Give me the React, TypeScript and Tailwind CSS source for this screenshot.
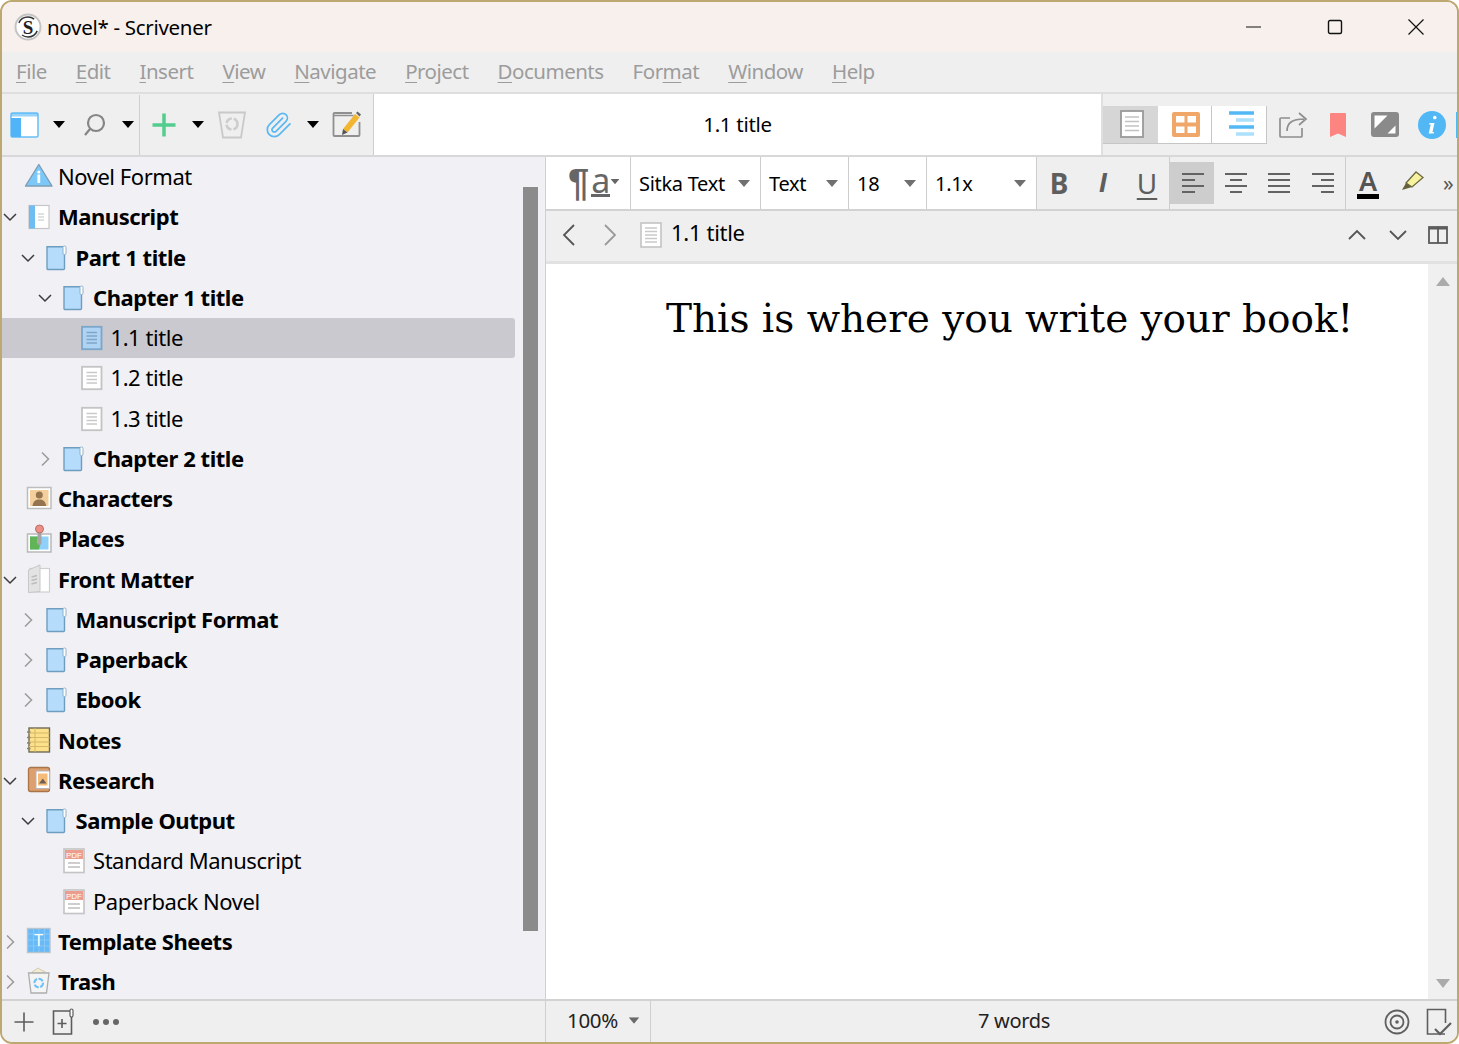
import type {ReactNode} from "react";

type IconName = "info" | "book" | "folder" | "doc" | "docSel" | "chars" | "places" | "front" | "notes" | "research" | "pdf" | "sheet" | "trash";

interface Row {
    label: string;
    depth: 0 | 1 | 2 | 3;
    bold?: boolean;
    open?: boolean;
    icon: IconName;
    selected?: boolean;
}

const rows: Row[] = [
    {label: "Novel Format", depth: 0, icon: "info"},
    {label: "Manuscript", depth: 0, bold: true, open: true, icon: "book"},
    {label: "Part 1 title", depth: 1, bold: true, open: true, icon: "folder"},
    {label: "Chapter 1 title", depth: 2, bold: true, open: true, icon: "folder"},
    {label: "1.1 title", depth: 3, icon: "docSel", selected: true},
    {label: "1.2 title", depth: 3, icon: "doc"},
    {label: "1.3 title", depth: 3, icon: "doc"},
    {label: "Chapter 2 title", depth: 2, bold: true, open: false, icon: "folder"},
    {label: "Characters", depth: 0, bold: true, icon: "chars"},
    {label: "Places", depth: 0, bold: true, icon: "places"},
    {label: "Front Matter", depth: 0, bold: true, open: true, icon: "front"},
    {label: "Manuscript Format", depth: 1, bold: true, open: false, icon: "folder"},
    {label: "Paperback", depth: 1, bold: true, open: false, icon: "folder"},
    {label: "Ebook", depth: 1, bold: true, open: false, icon: "folder"},
    {label: "Notes", depth: 0, bold: true, icon: "notes"},
    {label: "Research", depth: 0, bold: true, open: true, icon: "research"},
    {label: "Sample Output", depth: 1, bold: true, open: true, icon: "folder"},
    {label: "Standard Manuscript", depth: 2, icon: "pdf"},
    {label: "Paperback Novel", depth: 2, icon: "pdf"},
    {label: "Template Sheets", depth: 0, bold: true, open: false, icon: "sheet"},
    {label: "Trash", depth: 0, bold: true, open: false, icon: "trash"},
];

const indent = ["pl-0", "pl-[17.5px]", "pl-[35px]", "pl-[52.5px]"];

function TreeIcon({name}: { name: IconName }) {
    return (
        <svg width="24" height="26" viewBox="0 0 24 26" className="shrink-0 ml-[7px] overflow-visible">
            {name === "info" && (
                <g>
                    <path d="M13.8 0.5 27 22H0.5Z" fill="#7cc8f8" stroke="#7d9db5" strokeWidth="1.4" strokeLinejoin="round"/>
                    <rect x="12.4" y="10.5" width="2.8" height="8.5" fill="#fff"/>
                    <circle cx="13.8" cy="8" r="1.6" fill="#fff"/>
                </g>
            )}
            {name === "book" && (
                <g>
                    <rect x="4" y="1.5" width="20" height="23" fill="#fff" stroke="#c6c6c6" strokeWidth="1.2"/>
                    <rect x="4" y="1.5" width="6" height="23" fill="#6fbcf2"/>
                    <path d="M13 10h6M13 13h6M13 16h6" stroke="#c4c4c4" strokeWidth="1.2"/>
                </g>
            )}
            {name === "folder" && (
                <g>
                    <path d="M4 1.7H21.5V23.5a1 1 0 0 1-1 1H5a1 1 0 0 1-1-1Z" fill="#b5dcfb" stroke="#6f9dbf" strokeWidth="1.4"/>
                    <rect x="20" y="1" width="3" height="8.5" rx="1.3" fill="#fff" stroke="#8fb2cb" strokeWidth="1"/>
                </g>
            )}
            {name === "doc" && (
                <g>
                    <rect x="4" y="1.8" width="19.5" height="22.4" fill="#fff" stroke="#c4c4c4" strokeWidth="1.8"/>
                    <path d="M8.5 7.5h10.500M8.5 11h10.500M8.5 14.500h10.500M8.5 18h10.500" stroke="#c9c9c9" strokeWidth="1.3"/>
                </g>
            )}
            {name === "docSel" && (
                <g>
                    <rect x="4" y="1.8" width="19.5" height="22.4" fill="#afd3f2" stroke="#7da6cb" strokeWidth="1.8"/>
                    <path d="M8.5 7.5h10.500M8.5 11h10.500M8.5 14.500h10.500M8.5 18h10.500" stroke="#7fa6c9" strokeWidth="1.3"/>
                </g>
            )}
            {name === "chars" && (
                <g>
                    <rect x="2.5" y="1.5" width="23.5" height="21" fill="#fff" stroke="#bdbdbd" strokeWidth="1.5"/>
                    <rect x="5" y="4" width="18.5" height="16" fill="#f3cf9d"/>
                    <circle cx="14.3" cy="9" r="3.5" fill="#94744e"/>
                    <path d="M7.5 20c.6-5 3.2-6.500 6.800-6.500s6.200 1.500 6.800 6.500Z" fill="#94744e"/>
                </g>
            )}
            {name === "places" && (
                <g>
                    <rect x="2.5" y="8" width="23.5" height="18" fill="#fff" stroke="#b9b9b9" strokeWidth="1.5"/>
                    <rect x="5" y="10.5" width="18.5" height="13" fill="#8ed0f7"/>
                    <path d="M5 10.500h8l-1 6 3 3-1 4H5Z" fill="#62b556"/>
                    <rect x="12.5" y="6" width="4" height="13" rx="2" fill="#a5a5a5"/>
                    <circle cx="14.5" cy="3" r="4" fill="#ee8f85" stroke="#b86e67"/>
                </g>
            )}
            {name === "front" && (
                <g>
                    <rect x="5" y="1.5" width="19.5" height="23.5" fill="#fff" stroke="#cfcfcf" strokeWidth="1.2"/>
                    <path d="M3.500 3 15-2v26.500L3.500 25.500Z" fill="#e3e3e3" stroke="#c7c7c7"/>
                    <path d="M6.500 10l5.500-1.500M6.500 13.500l5.500-1.500M6.500 17l5.500-1.500" stroke="#bcbcbc" strokeWidth="1.3"/>
                </g>
            )}
            {name === "notes" && (
                <g>
                    <rect x="4" y="0" width="20.5" height="24" fill="#fce08a" stroke="#6f6a58" strokeWidth="1.4"/>
                    <path d="M4 5h20.500M4 9.500h20.500M4 14h20.500M4 18.500h20.500M10 0v24" stroke="#d6b865" strokeWidth="1"/>
                    <path d="M2 4h3.500M2 9.500h3.500M2 15h3.500M2 20.500h3.500" stroke="#8b8166" strokeWidth="1.5"/>
                </g>
            )}
            {name === "research" && (
                <g>
                    <rect x="3.5" y="-.5" width="21" height="24" rx="2" fill="#dd9f6e" stroke="#a97449" strokeWidth="1.3"/>
                    <rect x="11" y="3" width="13.5" height="17.5" fill="#fff" stroke="#b6b6b6"/>
                    <rect x="13" y="5.5" width="9.5" height="12" fill="#f7bb79"/>
                    <path d="M14 15.500 17.800 10.500l3.700 5Z" fill="#686058"/>
                </g>
            )}
            {name === "pdf" && (
                <g>
                    <rect x="4" y="1" width="20" height="23.5" fill="#fff" stroke="#c4c4c4" strokeWidth="1.6"/>
                    <rect x="5" y="2" width="18" height="9" fill="#ed9d8d"/>
                    <text x="14" y="9.5" textAnchor="middle" fontSize="8" fontFamily="Liberation Sans" fill="#fff">PDF</text>
                    <path d="M8 15h12M8 19h12" stroke="#bfbfbf" strokeWidth="1.4"/>
                </g>
            )}
            {name === "sheet" && (
                <g>
                    <rect x="2.5" y="-.5" width="22.5" height="24" fill="#67b9f7" stroke="#b9c4cc" strokeWidth="1.4"/>
                    <path d="M2.500 5h22.500M2.500 11h22.500M2.500 17h22.500M8.500 -.500v24M14 -.500v24M19.500 -.500v24" stroke="#8ecbf8" strokeWidth=".8"/>
                    <text x="13.7" y="17" textAnchor="middle" fontSize="16" fontFamily="Noto Sans" fill="#fff">T</text>
                </g>
            )}
            {name === "trash" && (
                <g>
                    <path d="M7 3l6-4 4 2.500 3 1-1 1.500H8Z" fill="#f3ead0" stroke="#c8c2ab" strokeWidth=".8"/>
                    <path d="M3.500 4h20.500l-2.500 20H6Z" fill="#f4f4f4" stroke="#adadad" strokeWidth="1.3"/>
                    <circle cx="13.7" cy="14" r="4.3" fill="none" stroke="#6ec1f5" strokeWidth="2" strokeDasharray="5 1.5"/>
                </g>
            )}
        </svg>
    );
}

function Chevron({open}: { open: boolean }) {
    return (
        <svg width="16" height="16" viewBox="0 0 16 16" className="shrink-0" fill="none" strokeWidth="1.5"
             stroke={open ? "#3c3c3c" : "#9a9a9a"}>
            {open ? <path d="M2 5 8 11l6-6"/> : <path d="M5 1.500 11.500 8 5 14.500"/>}
        </svg>
    );
}

function Caret({className = "", color = "#000"}: { className?: string; color?: string }) {
    return (
        <svg width="12" height="7" viewBox="0 0 12 7" className={`shrink-0 ${className}`}>
            <path d="M0 0h12L6 7Z" fill={color}/>
        </svg>
    );
}

function TreeRow({row}: { row: Row }) {
    return (
        <div className={`flex items-center h-[40.25px] rounded-r-[3px] text-[22px] text-black ${indent[row.depth]} ${row.selected ? "bg-[#c9c9cf]" : ""}`}>
            <span className="w-[16px] h-[16px] shrink-0">
                {row.open !== undefined && <Chevron open={row.open}/>}
            </span>
            <TreeIcon name={row.icon}/>
            <span className={`ml-[9px] -mt-[1px] whitespace-nowrap tracking-[-0.45px] ${row.bold ? "font-bold" : ""}`}>{row.label}</span>
        </div>
    );
}

function Sidebar() {
    return (
        <div className="w-[544px] shrink-0 bg-[#f0f0f5] flex border-r border-[#cfcfcf]">
            <div className="w-[513px] shrink-0">
                {rows.map((row) => <TreeRow key={row.label} row={row}/>)}
            </div>
            <div className="flex-1">
                <div className="ml-[8px] mt-[30px] w-[15px] h-[744px] bg-[#8b8b8b]"/>
            </div>
        </div>
    );
}

const menus: { pre: string; key: string; post: string }[] = [
    {pre: "", key: "F", post: "ile"},
    {pre: "", key: "E", post: "dit"},
    {pre: "", key: "I", post: "nsert"},
    {pre: "", key: "V", post: "iew"},
    {pre: "", key: "N", post: "avigate"},
    {pre: "", key: "P", post: "roject"},
    {pre: "", key: "D", post: "ocuments"},
    {pre: "For", key: "m", post: "at"},
    {pre: "", key: "W", post: "indow"},
    {pre: "", key: "H", post: "elp"},
];

function TitleBar() {
    return (
        <div className="h-[50px] shrink-0 bg-[#f7f0ed] flex items-center">
            <svg width="28" height="28" viewBox="0 0 28 28" className="ml-[12px]">
                <circle cx="14" cy="14" r="12.5" fill="#fff" stroke="#c4c4c4" strokeWidth="2"/>
                <circle cx="14" cy="14" r="10" fill="none" stroke="#333" strokeWidth="1.5" strokeDasharray="18 13.4" strokeDashoffset="-4"/>
                <text x="14" y="20.5" textAnchor="middle" fontSize="19" fontWeight="700" fontFamily="Liberation Serif" fill="#222">S</text>
            </svg>
            <span className="ml-[5px] text-[20.5px] tracking-[-0.3px] text-black">novel* - Scrivener</span>
            <div className="ml-auto flex items-center">
                <svg width="16" height="16" viewBox="0 0 16 16"><path d="M0 8h15" stroke="#111" strokeWidth="1.1"/></svg>
                <svg width="16" height="16" viewBox="0 0 16 16" className="ml-[65px]">
                    <rect x="1.5" y="1.5" width="13" height="13" rx="1.5" fill="none" stroke="#111" strokeWidth="1.4"/>
                </svg>
                <svg width="16" height="16" viewBox="0 0 16 16" className="ml-[65px] mr-[33px]">
                    <path d="M.5.500l15 15M15.500.500l-15 15" stroke="#111" strokeWidth="1.2"/>
                </svg>
            </div>
        </div>
    );
}

function MenuBar() {
    return (
        <div className="h-[42px] shrink-0 bg-[#efefef] border-b-2 border-[#dedede] flex items-center gap-[29px] pl-[14px] pb-[2px] text-[20.5px] tracking-[-0.5px] text-[#9c9c9c]">
            {menus.map((m) => (
                <span key={m.key}>{m.pre}<span className="underline underline-offset-[3px] decoration-1">{m.key}</span>{m.post}</span>
            ))}
        </div>
    );
}

function LeftTools() {
    return (
        <div className="w-[372px] shrink-0 bg-[#efefef] flex items-center border-r border-[#cfcfcf]">
            <svg width="30" height="26" viewBox="0 0 30 26" className="ml-[8px]">
                <rect x="1" y="1" width="27" height="24" rx="1.5" fill="#fff" stroke="#67bdf7" strokeWidth="1.5"/>
                <path d="M1 1h27v3.500H1Z" fill="#55b7f6" opacity=".6"/>
                <rect x="1" y="6" width="10" height="19" fill="#50b4f6"/>
            </svg>
            <Caret className="ml-[13px]"/>
            <svg width="26" height="26" viewBox="0 0 26 26" className="ml-[17px]" fill="none" stroke="#858585" strokeWidth="2.2">
                <circle cx="14" cy="11" r="8"/>
                <path d="M8 17l-5 6"/>
            </svg>
            <Caret className="ml-[14px]"/>
            <span className="ml-[5px] w-px h-[60px] bg-[#cfcfcf]"/>
            <svg width="26" height="26" viewBox="0 0 26 26" className="ml-[11px]">
                <path d="M13 1.500v23M1.500 13h23" stroke="#53cd8d" strokeWidth="3.5"/>
            </svg>
            <Caret className="ml-[15px]"/>
            <svg width="30" height="28" viewBox="0 0 30 28" className="ml-[13px]" fill="none">
                <path d="M2 1.500h26l-4 25H6Z" stroke="#c9c9c9" strokeWidth="1.8"/>
                <circle cx="15" cy="13" r="5.5" stroke="#cdcdcd" strokeWidth="2.6" strokeDasharray="7 2"/>
            </svg>
            <svg width="28" height="28" viewBox="0 0 24 24" className="ml-[18px]" fill="none" stroke="#5cb8f2" strokeWidth="1.5" strokeLinecap="round">
                <path d="m21.400 11.050-9.190 9.190a6 6 0 0 1-8.490-8.490l8.570-8.570A4 4 0 1 1 18 8.840l-8.590 8.570a2 2 0 0 1-2.830-2.830l8.490-8.480"/>
            </svg>
            <Caret className="ml-[14px]"/>
            <svg width="30" height="28" viewBox="0 0 30 28" className="ml-[13px] -mt-[2px]" fill="none">
                <path d="M1.500 5.500h20" stroke="#8f8f8f" strokeWidth="1.5"/>
                <path d="M20 3H2.500a1 1 0 0 0-1 1v21a1 1 0 0 0 1 1H26.500a1 1 0 0 0 1-1V12" stroke="#8f8f8f" strokeWidth="1.8"/>
                <path d="M11 19 23 4l4.500 3.500L15.500 22.500Z" fill="#f2b632"/>
                <path d="M10 25l1-6 4.500 3.500Z" fill="#555"/>
                <path d="M24 3l1.500-1.500 3.500 3-1.500 2Z" fill="#666"/>
            </svg>
        </div>
    );
}

function RightTools() {
    return (
        <div className="flex-1 bg-[#efefef] flex items-center border-l-2 border-[#dfdfdf] overflow-hidden">
            <div className="flex h-[38px] border-b border-[#c6c6c6] shrink-0">
                <div className="w-[55px] pl-[2px] bg-[#d6d6d6] flex items-center justify-center">
                    <svg width="24" height="28" viewBox="0 0 24 28" fill="#fff">
                        <rect x="1" y="1" width="22" height="26" stroke="#9a9a9a" strokeWidth="1.8"/>
                        <path d="M5 7h14M5 11.500h14M5 16h14M5 20.500h14" stroke="#c2c2c2" strokeWidth="1.5"/>
                    </svg>
                </div>
                <div className="w-[54px] pl-[2px] bg-white flex items-center justify-center border-r border-[#c6c6c6]">
                    <svg width="28" height="25" viewBox="0 0 28 25">
                        <rect width="28" height="25" rx="2" fill="#efa76a"/>
                        <path d="M4 4h8.500v6.500H4ZM15.500 4H24v6.500h-8.500ZM4 14.500h8.500V21H4ZM15.500 14.500H24V21h-8.500Z" fill="#fff"/>
                    </svg>
                </div>
                <div className="w-[55px] pl-[4px] bg-white flex items-center justify-center border-r border-[#c6c6c6]">
                    <svg width="26" height="26" viewBox="0 0 26 26">
                        <path d="M1 2h25M1 16h25" stroke="#53b9f5" strokeWidth="3.5"/>
                        <path d="M8 9h18M8 23h18" stroke="#ace0fb" strokeWidth="3.5"/>
                    </svg>
                </div>
            </div>
            <svg width="30" height="28" viewBox="0 0 30 28" className="ml-[11px] shrink-0" fill="none" stroke="#8f8f8f" strokeWidth="1.7">
                <path d="M12 7H3a1 1 0 0 0-1 1v17a1 1 0 0 0 1 1h20a1 1 0 0 0 1-1v-8"/>
                <path d="M9 20c0-8 5-12 17-12M21 2l7 6-7 6"/>
            </svg>
            <svg width="18" height="26" viewBox="0 0 18 26" className="ml-[21px] shrink-0">
                <path d="M1 2a1 1 0 0 1 1-1h14a1 1 0 0 1 1 1v23l-8-3.500L1 25Z" fill="#fc8481"/>
            </svg>
            <svg width="28" height="26" viewBox="0 0 28 26" className="ml-[24px] shrink-0">
                <rect width="28" height="25" rx="3" fill="#8a8a8a"/>
                <path d="M3.500 3.500h13l-13 13ZM24.500 21.500h-8l8-8Z" fill="#fff"/>
            </svg>
            <svg width="28" height="28" viewBox="0 0 28 28" className="ml-[19px] shrink-0">
                <circle cx="14" cy="14" r="14" fill="#51b7f5"/>
                <path d="M15 6.500a1.800 1.800 0 1 1 0 .1ZM11.500 12h5l-2 9 1.500 0-.300 1.500h-5l2-9h-1.500Z" fill="#fff"/>
            </svg>
            <span className="ml-[10px] w-[4px] h-[26px] bg-[#51b7f5] shrink-0"/>
        </div>
    );
}

function Toolbar() {
    return (
        <div className="h-[63px] shrink-0 flex border-b-2 border-[#d8d8d8]">
            <LeftTools/>
            <div className="w-[727px] shrink-0 bg-white flex items-center justify-center text-[20.5px] tracking-[-0.3px] text-black">1.1 title</div>
            <RightTools/>
        </div>
    );
}

function Drop({label, width}: { label: string; width: string }) {
    return (
        <div className={`${width} shrink-0 bg-white border-r border-[#cdcdcd] flex items-center pl-[8px] pr-[10px] text-[20px] tracking-[-0.3px] text-black`}>
            <span className="mt-[1px]">{label}</span>
            <Caret className="ml-auto" color="#6f6f6f"/>
        </div>
    );
}

function AlignIcon({kind, active}: { kind: "left" | "center" | "full" | "right"; active?: boolean }) {
    const d = {
        left: "M0 2h22M0 8h13M0 14h22M0 20h13",
        center: "M0 2h22M5 8h12M0 14h22M5 20h12",
        full: "M0 2h22M0 8h22M0 14h22M0 20h22",
        right: "M0 2h22M9 8h13M0 14h22M9 20h13",
    }[kind];
    return (
        <div className={`w-[44px] h-[42px] flex items-center justify-center ${active ? "bg-[#cdcdcd] pl-[3px]" : ""}`}>
            <svg width="22" height="22" viewBox="0 0 22 22"><path d={d} stroke="#636363" strokeWidth="1.8" fill="none"/></svg>
        </div>
    );
}

function FormatBar() {
    return (
        <div className="h-[54px] shrink-0 flex bg-[#efefef] border-b-2 border-[#d2d2d2] overflow-hidden">
            <div className="w-[85px] shrink-0 bg-white border-r border-[#cdcdcd] flex items-center pl-[22px] text-[#666]">
                <span className="text-[38px] leading-none font-bold font-['Liberation_Sans'] -mt-[1px]">¶</span>
                <span className="text-[34px] leading-none border-b-[3px] border-[#666] ml-[2px] -mt-[3px] h-[30px] flex items-center">a</span>
                <Caret className="-ml-[1px] scale-75 -mt-[4px]" color="#666"/>
            </div>
            <Drop label="Sitka Text" width="w-[130px]"/>
            <Drop label="Text" width="w-[88px]"/>
            <Drop label="18" width="w-[78px]"/>
            <Drop label="1.1x" width="w-[110px]"/>
            <div className="w-[133px] shrink-0 flex items-center border-r border-[#cdcdcd] text-[#5e5e5e]">
                <span className="w-[44px] text-center text-[28px] font-bold">B</span>
                <span className="w-[44px] text-center text-[28px] font-bold italic font-['Liberation_Sans']">I</span>
                <span className="w-[44px] text-center text-[28px] underline underline-offset-[4px] decoration-2">U</span>
            </div>
            <div className="w-[176px] shrink-0 flex items-center border-r border-[#cdcdcd]">
                <AlignIcon kind="left" active/>
                <AlignIcon kind="center"/>
                <AlignIcon kind="full"/>
                <AlignIcon kind="right"/>
            </div>
            <div className="flex items-center">
                <div className="ml-[11px] flex flex-col items-center text-[#555]">
                    <span className="text-[27px] leading-[26px] font-semibold">A</span>
                    <span className="w-[22px] h-[5px] bg-black"/>
                </div>
                <svg width="24" height="22" viewBox="0 0 24 22" className="ml-[22px] -mt-[4px]">
                    <path d="M5 13 15 2l7 5.500L11 17Z" fill="#f6f2a0" stroke="#6d6a42" strokeWidth="1.3"/>
                    <path d="M5 13 1 20l10-3Z" fill="#64603c"/>
                </svg>
                <span className="ml-[18px] text-[21px] leading-none text-[#555] whitespace-nowrap">»</span>
            </div>
        </div>
    );
}

function HeaderBar() {
    return (
        <div className="h-[53px] shrink-0 flex items-center pb-[3px] bg-[#efefef] border-b-[3px] border-[#e2e2e2] overflow-hidden">
            <svg width="16" height="24" viewBox="0 0 16 24" className="ml-[15px]" fill="none" stroke="#555" strokeWidth="1.8"><path d="M13 2 3 12l10 10"/></svg>
            <svg width="16" height="24" viewBox="0 0 16 24" className="ml-[25px]" fill="none" stroke="#999" strokeWidth="1.8"><path d="M3 2l10 10L3 22"/></svg>
            <svg width="22" height="26" viewBox="0 0 22 26" className="ml-[22px]">
                <rect x="1" y="1" width="20" height="24" fill="#fff" stroke="#c4c4c4" strokeWidth="1.6"/>
                <path d="M5 6h12M5 9.500h12M5 13h12M5 16.500h12M5 20h12" stroke="#c9c9c9" strokeWidth="1.3"/>
            </svg>
            <span className="ml-[9px] -mt-[5px] text-[22px] tracking-[-0.3px] text-black">1.1 title</span>
            <svg width="20" height="12" viewBox="0 0 20 12" className="ml-auto" fill="none" stroke="#555" strokeWidth="1.8"><path d="M2 10l8-8 8 8"/></svg>
            <svg width="20" height="12" viewBox="0 0 20 12" className="ml-[21px]" fill="none" stroke="#555" strokeWidth="1.8"><path d="M2 2l8 8 8-8"/></svg>
            <svg width="20" height="18" viewBox="0 0 20 18" className="ml-[20px] mr-[9px] shrink-0" fill="none" stroke="#5a5a5a" strokeWidth="1.8">
                <rect x="1" y="1" width="18" height="16"/>
                <path d="M10 1v16M1 2.500h18"/>
            </svg>
        </div>
    );
}

function Editor() {
    return (
        <div className="flex-1 flex flex-col min-w-0">
            <FormatBar/>
            <HeaderBar/>
            <div className="flex-1 flex min-h-0">
                <div className="flex-1 bg-white pl-[120px] pt-[29px] font-['DejaVu_Serif'] text-[39px] tracking-[-0.03px] leading-[52px] text-black whitespace-nowrap">
                    This is where you write your book!
                </div>
                <div className="w-[29px] shrink-0 bg-[#f0f0f0] flex flex-col items-center pt-[13px] pb-[11px] justify-between">
                    <svg width="14" height="9" viewBox="0 0 14 9"><path d="M0 9 7 0l7 9Z" fill="#ababab"/></svg>
                    <svg width="14" height="9" viewBox="0 0 14 9"><path d="M0 0h14L7 9Z" fill="#ababab"/></svg>
                </div>
            </div>
        </div>
    );
}

function Footer() {
    return (
        <div className="h-[43px] shrink-0 flex bg-[#efefef] border-t-2 border-[#d2d2d2] text-[20.5px] tracking-[-0.3px] text-[#222] overflow-hidden">
            <div className="w-[544px] shrink-0 flex items-center border-r border-[#cfcfcf]">
                <svg width="22" height="22" viewBox="0 0 22 22" className="ml-[11px]"><path d="M11 1.500v19M1.500 11h19" stroke="#5c5c5c" strokeWidth="1.6"/></svg>
                <svg width="24" height="28" viewBox="0 0 24 28" className="ml-[16px]" fill="none" stroke="#5c5c5c" strokeWidth="1.6">
                    <path d="M19 3H2.500v23h18V8"/>
                    <path d="M11 11v9M6.500 15.500h9"/>
                    <rect x="19" y="1" width="3" height="8" rx="1.5" fill="#fff" strokeWidth="1.2"/>
                </svg>
                <span className="ml-[18px] flex gap-[4px]">
                    <span className="w-[6px] h-[6px] rounded-full bg-[#666]"/>
                    <span className="w-[6px] h-[6px] rounded-full bg-[#666]"/>
                    <span className="w-[6px] h-[6px] rounded-full bg-[#666]"/>
                </span>
            </div>
            <div className="w-[105px] shrink-0 flex items-center pl-[21px] pb-[2px] border-r border-[#cfcfcf]">
                <span>100%</span>
                <Caret className="ml-[10px] scale-90" color="#6a6a6a"/>
            </div>
            <div className="flex-1 flex items-center justify-center pb-[2px]">
                <span className="mr-[7px] text-[20px]">7 words</span>
            </div>
            <div className="flex items-center shrink-0">
                <svg width="26" height="26" viewBox="0 0 26 26" fill="none" stroke="#5f5f5f" strokeWidth="1.8">
                    <circle cx="13" cy="13" r="11.5"/>
                    <circle cx="13" cy="13" r="6.5"/>
                    <circle cx="13" cy="13" r="1.8" fill="#5f5f5f" stroke="none"/>
                </svg>
                <svg width="30" height="28" viewBox="0 0 30 28" className="ml-[16px] mr-[1px]" fill="none" stroke="#5f5f5f" strokeWidth="1.6">
                    <path d="M19 26H1.500V1.500h18V15"/>
                    <path d="M9 21l5 5 11-11" strokeWidth="2.2"/>
                </svg>
            </div>
        </div>
    );
}

function Window({children}: { children: ReactNode }) {
    return (
        <div className="w-[1459px] h-[1044px] bg-white overflow-hidden font-['Noto_Sans','Open_Sans',sans-serif]">
            <div className="h-full border-2 border-[#bea871] rounded-[12px] overflow-hidden flex flex-col">
                {children}
            </div>
        </div>
    );
}

export default function App() {
    return (
        <Window>
            <TitleBar/>
            <MenuBar/>
            <Toolbar/>
            <div className="flex-1 flex min-h-0">
                <Sidebar/>
                <Editor/>
            </div>
            <Footer/>
        </Window>
    );
}
